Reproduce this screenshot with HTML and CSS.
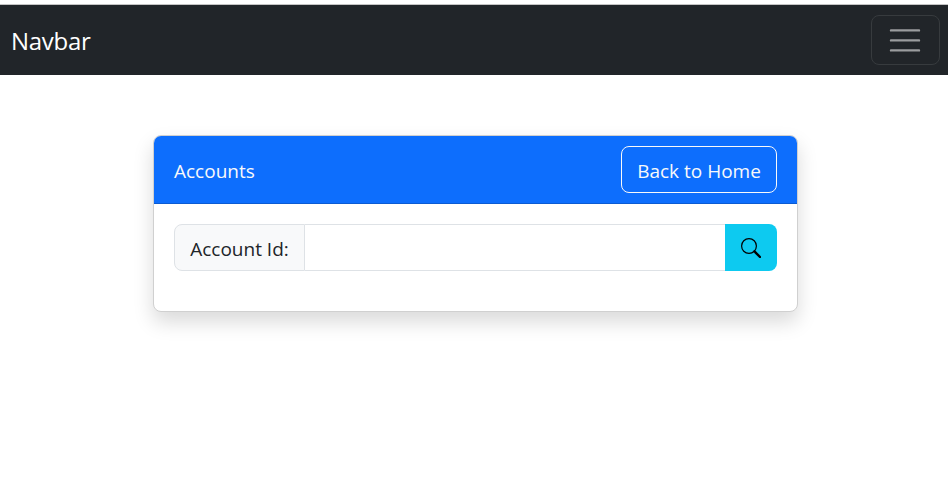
FILE: index.html
```html
<!DOCTYPE html>
<html lang="en">
<head>
<meta charset="utf-8">
<title>Accounts</title>
<link rel="stylesheet" href="styles.css">
</head>
<body>
<nav class="navbar">
  <a class="brand">Navbar</a>
  <button class="toggler" aria-label="Toggle navigation">
    <svg width="38" height="38" viewBox="0 0 38 38"><path stroke="#fff" stroke-opacity=".55" stroke-linecap="round" stroke-width="2.4" d="M5 9.4h28M5 19.4h28M5 29.4h28"/></svg>
  </button>
</nav>
<main class="card">
  <header class="card-header">
    <span class="title">Accounts</span>
    <button class="home"><span>Back to Home</span></button>
  </header>
  <div class="card-body">
    <div class="input-group">
      <label class="addon" for="account"><span>Account Id:</span></label>
      <input class="field" id="account" type="text">
      <button class="search" aria-label="Search">
        <svg width="20" height="20" viewBox="0 0 20 20" fill="none" stroke="#000"><circle cx="8" cy="8" r="7.4" stroke-width="1.2"/><path d="M13.4 13.4L19 19" stroke-width="2.4" stroke-linecap="round"/></svg>
      </button>
    </div>
  </div>
</main>
</body>
</html>
```
FILE: styles.css
```css
* {
  box-sizing: border-box;
}

body {
  min-height: 100vh;
  margin: 0;
  padding-top: 4px;
  background: #fff;
  color: #212529;
  font-family: "Open Sans", "Noto Sans", sans-serif;
  font-size: 19px;
}

button {
  margin: 0;
  font: inherit;
}

.navbar {
  display: flex;
  align-items: center;
  justify-content: space-between;
  height: 71px;
  padding: 0 8px 0 11px;
  border-top: 1px solid #c4c4c4;
  background: #212529;
}

.brand {
  color: #fff;
  font-size: 24px;
  letter-spacing: -0.3px;
}

.toggler {
  display: flex;
  align-items: center;
  justify-content: center;
  width: 69px;
  height: 50px;
  padding: 0 1px 0 0;
  border: 1px solid #373b3e;
  border-radius: 8px;
  background: transparent;
}

.card {
  width: 645px;
  height: 177px;
  margin: 60px 0 0 153px;
  border: 1px solid #d0d0d0;
  border-radius: 8px;
  background: #fff;
  box-shadow: 0 10px 20px rgba(0, 0, 0, 0.15);
}

.card-header {
  display: flex;
  align-items: center;
  justify-content: space-between;
  height: 68px;
  padding: 0 20px;
  border-bottom: 1px solid #0b5bd2;
  border-radius: 7px 7px 0 0;
  background: #0d6efd;
  color: #f8f9fa;
}

.title {
  padding-top: 2px;
}

.home {
  width: 156px;
  height: 47px;
  padding: 2px 0 0;
  border: 1px solid #f8f9fa;
  border-radius: 8px;
  background: transparent;
  color: #f8f9fa;
  white-space: nowrap;
}

.card-body {
  padding: 20px;
}

.input-group {
  display: flex;
  height: 47px;
}

.addon {
  display: flex;
  align-items: center;
  justify-content: center;
  width: 131px;
  padding-top: 2px;
  border: 1px solid #dee2e6;
  border-radius: 8px 0 0 8px;
  background: #f8f9fa;
  white-space: nowrap;
}

.field {
  flex: 1;
  min-width: 0;
  border: solid #dee2e6;
  border-width: 1px 0;
  outline: 0;
}

.search {
  display: flex;
  align-items: center;
  justify-content: center;
  width: 52px;
  padding: 0;
  border: 0;
  border-radius: 0 8px 8px 0;
  background: #0dcaf0;
}
```
